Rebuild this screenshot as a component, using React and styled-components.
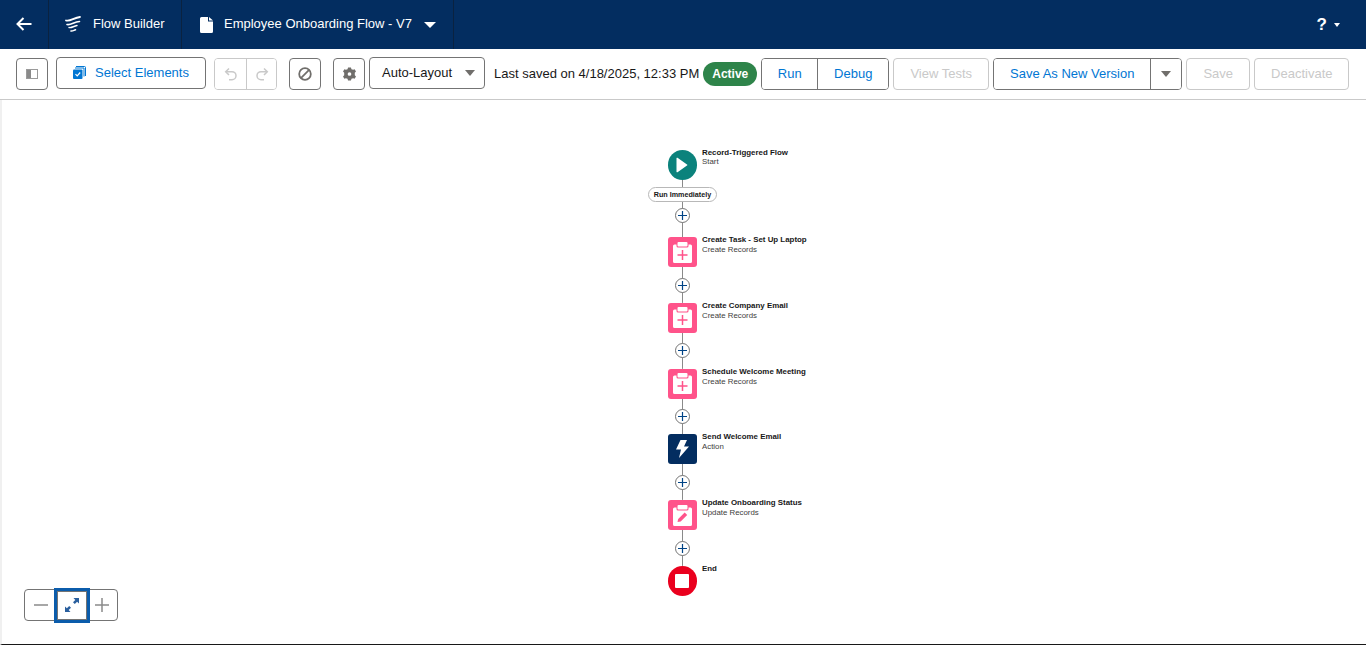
import React from 'react';
import styled, { createGlobalStyle } from 'styled-components';

const GlobalStyle = createGlobalStyle`
  html, body {
    margin: 0;
    padding: 0;
    background: #fff;
    overflow: hidden;
  }
  * { box-sizing: border-box; }
  body {
    font-family: "Liberation Sans", Arial, sans-serif;
    font-size: 13px;
    color: #181818;
  }
`;

const Page = styled.div`
  display: flex;
  flex-direction: column;
  height: 645px;
  width: 1366px;
`;

const Header = styled.header`
  display: flex;
  align-items: stretch;
  height: 49px;
  background: #032d60;
  color: #fff;
`;

const HeaderCell = styled.div`
  display: flex;
  align-items: center;
  width: ${p => p.$width}px;
  padding-left: ${p => p.$pad}px;
  border-right: 1px solid #0a2240;
`;

const HeaderLabel = styled.span`
  margin-left: ${p => p.$gap}px;
  padding-bottom: 2px;
  font-size: 13px;
`;

const HelpMenu = styled.div`
  margin-left: auto;
  display: flex;
  align-items: center;
  padding-right: 26px;
  gap: 7px;
  font-size: 17px;
  font-weight: 700;
`;

const SmallCaret = styled.span`
  width: 0;
  height: 0;
  border-left: 3.5px solid transparent;
  border-right: 3.5px solid transparent;
  border-top: 4px solid #fff;
`;

const HeaderCaret = styled.span`
  width: 0;
  height: 0;
  margin-left: 12px;
  border-left: 6px solid transparent;
  border-right: 6px solid transparent;
  border-top: 6px solid #fff;
`;

const Toolbar = styled.div`
  display: flex;
  align-items: center;
  height: 51px;
  padding-left: 16px;
  border-bottom: 1px solid #c9c9c9;
  background: #fff;
`;

const Btn = styled.button`
  display: flex;
  align-items: center;
  justify-content: center;
  gap: ${p => p.$gap || 0}px;
  flex: none;
  height: 32px;
  width: ${p => p.$width}px;
  margin-left: ${p => p.$ml || 0}px;
  margin-top: ${p => p.$mt || 0}px;
  padding: 0 0 ${p => (p.$icon ? 0 : 2)}px;
  background: #fff;
  border: 1px solid ${p => (p.disabled ? '#c9c9c9' : '#747474')};
  border-radius: 4px;
  font: inherit;
  font-size: 13px;
  color: ${p => (p.disabled ? '#c9c9c9' : '#0176d3')};
`;

const Group = styled.div`
  display: flex;
  flex: none;
  height: 32px;
  margin-left: ${p => p.$ml}px;
  border: 1px solid ${p => (p.$off ? '#c9c9c9' : '#747474')};
  border-radius: 4px;
  overflow: hidden;
`;

const GroupBtn = styled.button`
  display: flex;
  align-items: center;
  justify-content: center;
  width: ${p => p.$width}px;
  height: 100%;
  padding: 0 0 ${p => (p.$icon ? 0 : 2)}px;
  background: #fff;
  border: 0;
  border-left: ${p => (p.$first ? '0' : `1px solid ${p.disabled ? '#c9c9c9' : '#747474'}`)};
  font: inherit;
  font-size: 13px;
  color: #0176d3;
`;

const LayoutSelect = styled.div`
  display: flex;
  align-items: center;
  justify-content: space-between;
  flex: none;
  width: 116px;
  height: 32px;
  margin: -2px 0 0 4px;
  padding: 0 9px 0 12px;
  border: 1px solid #747474;
  border-radius: 4px;
  font-size: 13px;
  color: #181818;
`;

const Caret = styled.span`
  width: 0;
  height: 0;
  border-left: 5.5px solid transparent;
  border-right: 5.5px solid transparent;
  border-top: 6px solid #706e6b;
`;

const SelectLabel = styled.span`
  padding-bottom: 2px;
`;

const SavedText = styled.span`
  flex: none;
  margin: -2px 0 0 9px;
  font-size: 13px;
  color: #181818;
`;

const StatusPill = styled.span`
  flex: none;
  display: flex;
  align-items: center;
  justify-content: center;
  width: 54px;
  height: 24px;
  margin-left: 4px;
  padding-bottom: 1px;
  border-radius: 12px;
  background: #2e844a;
  color: #fff;
  font-size: 12px;
  font-weight: 700;
`;

const Canvas = styled.main`
  position: relative;
  flex: 1;
  display: flex;
  flex-direction: column;
  align-items: center;
  padding: 50px 3px 0 0;
  border-bottom: 1px solid #181818;
  border-left: 2px solid #f0f0f0;
  background: #fff;
`;

const Step = styled.div`
  display: flex;
  gap: 5px;
  width: 30px;
`;

const NodeIcon = styled.div`
  flex: none;
  display: flex;
  align-items: center;
  justify-content: center;
  width: 29.5px;
  height: 30px;
  border-radius: ${p => (p.$round ? '50%' : '3px')};
  background: ${p => p.$bg};
`;

const NodeText = styled.div`
  flex: none;
  width: 0;
  margin-top: -2px;
  white-space: nowrap;
`;

const NodeTitle = styled.div`
  font-size: 7.9px;
  line-height: 10px;
  font-weight: 700;
  color: #181818;
`;

const NodeType = styled.div`
  font-size: 7.85px;
  line-height: ${p => (p.$tight ? 8 : 10)}px;
  color: #3e3e3c;
`;

const Connector = styled.div`
  display: flex;
  flex-direction: column;
  align-items: center;
  justify-content: ${p => (p.$top ? 'flex-start' : 'center')};
  width: 30px;
  height: ${p => p.$height}px;
  padding-top: ${p => (p.$top ? 0 : 0.5)}px;
  background: linear-gradient(#8a8a8a, #8a8a8a) center / 1px 100% no-repeat;
`;

const AddButton = styled.div`
  display: flex;
  align-items: center;
  justify-content: center;
  width: 15px;
  height: 15px;
  border-radius: 50%;
  border: 1px solid #747474;
  background: #fff;
`;

const TriggerPill = styled.div`
  flex: none;
  width: 69px;
  height: 15px;
  margin-top: 7px;
  margin-bottom: 6px;
  border: 1px solid #b8b8b8;
  border-radius: 8px;
  background: #fff;
  font-size: 7.2px;
  line-height: 13px;
  font-weight: 700;
  color: #181818;
  text-align: center;
  white-space: nowrap;
`;

const ZoomControls = styled.div`
  position: absolute;
  left: 22px;
  bottom: 23px;
  display: flex;
  align-items: center;
  width: 94px;
  height: 32px;
  border: 1px solid #747474;
  border-radius: 4px;
  background: #fff;
`;

const ZoomBtn = styled.div`
  display: flex;
  align-items: center;
  justify-content: center;
  flex: 1;
  height: 100%;
  padding-left: ${p => p.$left || 0}px;
  padding-right: ${p => p.$right || 0}px;
`;

const ZoomFit = styled.div`
  display: flex;
  align-items: center;
  justify-content: center;
  flex: none;
  width: 36px;
  height: 35px;
  border: 3px solid #0b5cab;
  box-shadow: inset 0 0 0 1px #747474;
  background: #fff;
`;

const BackIcon = () => (
  <svg width="18" height="16" viewBox="0 0 18 16" fill="none" stroke="#fff" strokeWidth="2" style={{ marginLeft: -1, marginTop: -1 }}>
    <path d="M16.5 8H2.5M8.5 2L2.5 8l6 6" />
  </svg>
);

const FlowLogo = () => (
  <svg width="16" height="17" viewBox="0 0 16 17" fill="none" stroke="#fff" strokeLinecap="round">
    <path d="M1 4.500C5 6 9 1.500 15 1" strokeWidth="1.800" />
    <path d="M2 8.500C6 9.500 9 5.800 14.500 5.500" strokeWidth="1.600" />
    <path d="M4 11.500c2.500.8 4.500-1.500 8-2" strokeWidth="1.400" />
    <path d="M6 15c1.500.4 3-.8 4.500-1.200" strokeWidth="1.600" />
  </svg>
);

const DocIcon = () => (
  <svg width="13" height="16" viewBox="0 0 13 16" fill="#fff">
    <path d="M1.500 0H8v4.500h5V14.500A1.500 1.500 0 0 1 11.500 16h-10A1.500 1.500 0 0 1 0 14.500v-13A1.500 1.500 0 0 1 1.500 0z" />
    <path d="M9 0l4 3.500H9z" />
  </svg>
);

const PanelIcon = () => (
  <svg width="12" height="10" viewBox="0 0 12 10">
    <rect x=".5" y=".5" width="11" height="9" fill="none" stroke="#9a9a9a" />
    <rect x="1" y="1" width="4" height="8" fill="#8a8a8a" />
  </svg>
);

const SelectIcon = () => (
  <svg width="13" height="13" viewBox="0 0 13 13">
    <path d="M3 0.500h8.500a1 1 0 0 1 1 1V10" fill="none" stroke="#0176d3" />
    <path d="M2 2h9v8.500" fill="none" stroke="#0176d3" />
    <rect x="0" y="3.500" width="9.500" height="9.500" rx="1" fill="#0176d3" />
    <path d="M2.500 8.200l1.700 1.700 3-3.400" fill="none" stroke="#fff" strokeWidth="1.200" />
  </svg>
);

const UndoIcon = () => (
  <svg width="14" height="14" viewBox="0 0 14 14" fill="none" stroke="#c9c9c9" strokeWidth="1.500">
    <path d="M5 1.500L1.700 4.700 5 8" />
    <path d="M2 4.700h6a4 4 0 0 1 0 8H5" />
  </svg>
);

const RedoIcon = () => (
  <svg width="14" height="14" viewBox="0 0 14 14" fill="none" stroke="#c9c9c9" strokeWidth="1.500">
    <path d="M9 1.500l3.300 3.200L9 8" />
    <path d="M12 4.700H6a4 4 0 0 0 0 8h3" />
  </svg>
);

const BlockIcon = () => (
  <svg width="14" height="14" viewBox="0 0 14 14" fill="none" stroke="#706e6b" strokeWidth="1.800">
    <circle cx="7" cy="7" r="5.800" />
    <path d="M2.900 11.100l8.200-8.200" />
  </svg>
);

const GearIcon = () => (
  <svg width="13" height="14" viewBox="0 0 14 14">
    <path
      fill="#706e6b"
      fillRule="evenodd"
      d="M5.400 0h3.200l.5 1.900 1.800.4 1.600-.5 1.500 2.600-1.300 1.300v2.600l1.300 1.300-1.500 2.600-1.600-.5-1.800.4-.5 1.900H5.400l-.5-1.900-1.800-.4-1.600.5L0 9.600l1.300-1.300V5.700L0 4.400l1.500-2.600 1.600.5 1.800-.4zM7 5a2 2 0 1 0 0 4 2 2 0 0 0 0-4z"
    />
  </svg>
);

const PlayIcon = () => (
  <svg width="12" height="16" viewBox="0 0 12 16">
    <path d="M1.500 0.800L11 7.400a.7.700 0 0 1 0 1.200L1.500 15.200a.6.600 0 0 1-1-.5V1.300a.6.600 0 0 1 1-.5z" fill="#fff" />
  </svg>
);

const ClipboardBase = ({ children }) => (
  <svg width="19" height="21" viewBox="0 0 19 21">
    <path d="M1.500 2.500H3.500V4a1.500 1.500 0 0 0 1.500 1.500h9A1.500 1.500 0 0 0 15.500 4V2.500H17.500a1.500 1.500 0 0 1 1.500 1.500v15.500a1.500 1.500 0 0 1-1.500 1.500h-16A1.500 1.500 0 0 1 0 19.500V4a1.500 1.500 0 0 1 1.500-1.500z" fill="#fff" />
    <rect x="4.500" y="0" width="10" height="4.500" rx="1" fill="#fff" />
    {children}
  </svg>
);

const CreateIcon = () => (
  <ClipboardBase>
    <path d="M9.500 8v10M4.500 13h10" stroke="#ff538a" strokeWidth="1.500" />
  </ClipboardBase>
);

const UpdateIcon = () => (
  <ClipboardBase>
    <path d="M4.500 17l.7-3 6.500-6.500 2.500 2.500-6.500 6.500z" fill="#ff538a" />
  </ClipboardBase>
);

const BoltIcon = () => (
  <svg width="13" height="18" viewBox="0 0 13 18">
    <path d="M4.500 0h6.500L8 6.500h5L3 18l2-8.500H0z" fill="#fff" />
  </svg>
);

const StopIcon = () => (
  <svg width="14" height="14" viewBox="0 0 14 14">
    <rect width="14" height="14" rx="1" fill="#fff" />
  </svg>
);

const PlusIcon = () => (
  <svg width="9" height="9" viewBox="0 0 9 9" stroke="#014486" strokeWidth="1.200">
    <path d="M4.500 0v9M0 4.500h9" />
  </svg>
);

const ZoomLine = ({ plus }) => (
  <svg width="14" height="14" viewBox="0 0 14 14" stroke="#8a8a8a" strokeWidth="1.500">
    <path d="M0 7h14" />
    {plus && <path d="M7 0v14" />}
  </svg>
);

const FitIcon = () => (
  <svg width="14" height="14" viewBox="0 0 14 14" fill="#2a5f9e">
    <path d="M8.500 0H14v5.500l-1.900-1.800-2.300 2.300-1.800-1.800 2.300-2.300z" />
    <path d="M5.500 14H0V8.500l1.900 1.800 2.300-2.300 1.800 1.800-2.300 2.300z" />
  </svg>
);

const steps = [
  { title: 'Create Task - Set Up Laptop', type: 'Create Records', bg: '#ff538a', icon: <CreateIcon /> },
  { title: 'Create Company Email', type: 'Create Records', bg: '#ff538a', icon: <CreateIcon /> },
  { title: 'Schedule Welcome Meeting', type: 'Create Records', bg: '#ff538a', icon: <CreateIcon /> },
  { title: 'Send Welcome Email', type: 'Action', bg: '#032d60', icon: <BoltIcon /> },
  { title: 'Update Onboarding Status', type: 'Update Records', bg: '#ff538a', icon: <UpdateIcon /> },
];

export default function App() {
  return (
    <Page>
      <GlobalStyle />
      <Header>
        <HeaderCell $width={49} $pad={16}><BackIcon /></HeaderCell>
        <HeaderCell $width={133} $pad={16}>
          <FlowLogo />
          <HeaderLabel $gap={12}>Flow Builder</HeaderLabel>
        </HeaderCell>
        <HeaderCell $width={272} $pad={18}>
          <DocIcon />
          <HeaderLabel $gap={11}>Employee Onboarding Flow - V7</HeaderLabel>
          <HeaderCaret />
        </HeaderCell>
        <HelpMenu>?<SmallCaret /></HelpMenu>
      </Header>

      <Toolbar>
        <Btn $width={32} $icon><PanelIcon /></Btn>
        <Btn $width={150} $ml={8} $mt={-2} $gap={9}><SelectIcon />Select Elements</Btn>
        <Group $ml={8} $off>
          <GroupBtn $width={31} $first $icon disabled><UndoIcon /></GroupBtn>
          <GroupBtn $width={30} $icon disabled><RedoIcon /></GroupBtn>
        </Group>
        <Btn $width={32} $ml={12} $icon><BlockIcon /></Btn>
        <Btn $width={32} $ml={12} $icon><GearIcon /></Btn>
        <LayoutSelect><SelectLabel>Auto-Layout</SelectLabel><Caret /></LayoutSelect>
        <SavedText>Last saved on 4/18/2025, 12:33 PM</SavedText>
        <StatusPill>Active</StatusPill>
        <Group $ml={4}>
          <GroupBtn $width={55} $first>Run</GroupBtn>
          <GroupBtn $width={71}>Debug</GroupBtn>
        </Group>
        <Btn $width={96} $ml={4} disabled>View Tests</Btn>
        <Group $ml={4}>
          <GroupBtn $width={156} $first>Save As New Version</GroupBtn>
          <GroupBtn $width={31} $icon><Caret /></GroupBtn>
        </Group>
        <Btn $width={64} $ml={4} disabled>Save</Btn>
        <Btn $width={95} $ml={4} disabled>Deactivate</Btn>
      </Toolbar>

      <Canvas>
        <Step>
          <NodeIcon $round $bg="#0b827c"><PlayIcon /></NodeIcon>
          <NodeText>
            <NodeTitle>Record-Triggered Flow</NodeTitle>
            <NodeType $tight>Start</NodeType>
          </NodeText>
        </Step>
        <Connector $top $height={57}>
          <TriggerPill>Run Immediately</TriggerPill>
          <AddButton><PlusIcon /></AddButton>
        </Connector>
        {steps.map(step => (
          <React.Fragment key={step.title}>
            <Step>
              <NodeIcon $bg={step.bg}>{step.icon}</NodeIcon>
              <NodeText>
                <NodeTitle>{step.title}</NodeTitle>
                <NodeType>{step.type}</NodeType>
              </NodeText>
            </Step>
            <Connector $height={35.75}>
              <AddButton><PlusIcon /></AddButton>
            </Connector>
          </React.Fragment>
        ))}
        <Step>
          <NodeIcon $round $bg="#ea001e"><StopIcon /></NodeIcon>
          <NodeText>
            <NodeTitle>End</NodeTitle>
          </NodeText>
        </Step>

        <ZoomControls>
          <ZoomBtn $left={3}><ZoomLine /></ZoomBtn>
          <ZoomFit><FitIcon /></ZoomFit>
          <ZoomBtn $right={2}><ZoomLine plus /></ZoomBtn>
        </ZoomControls>
      </Canvas>
    </Page>
  );
}
